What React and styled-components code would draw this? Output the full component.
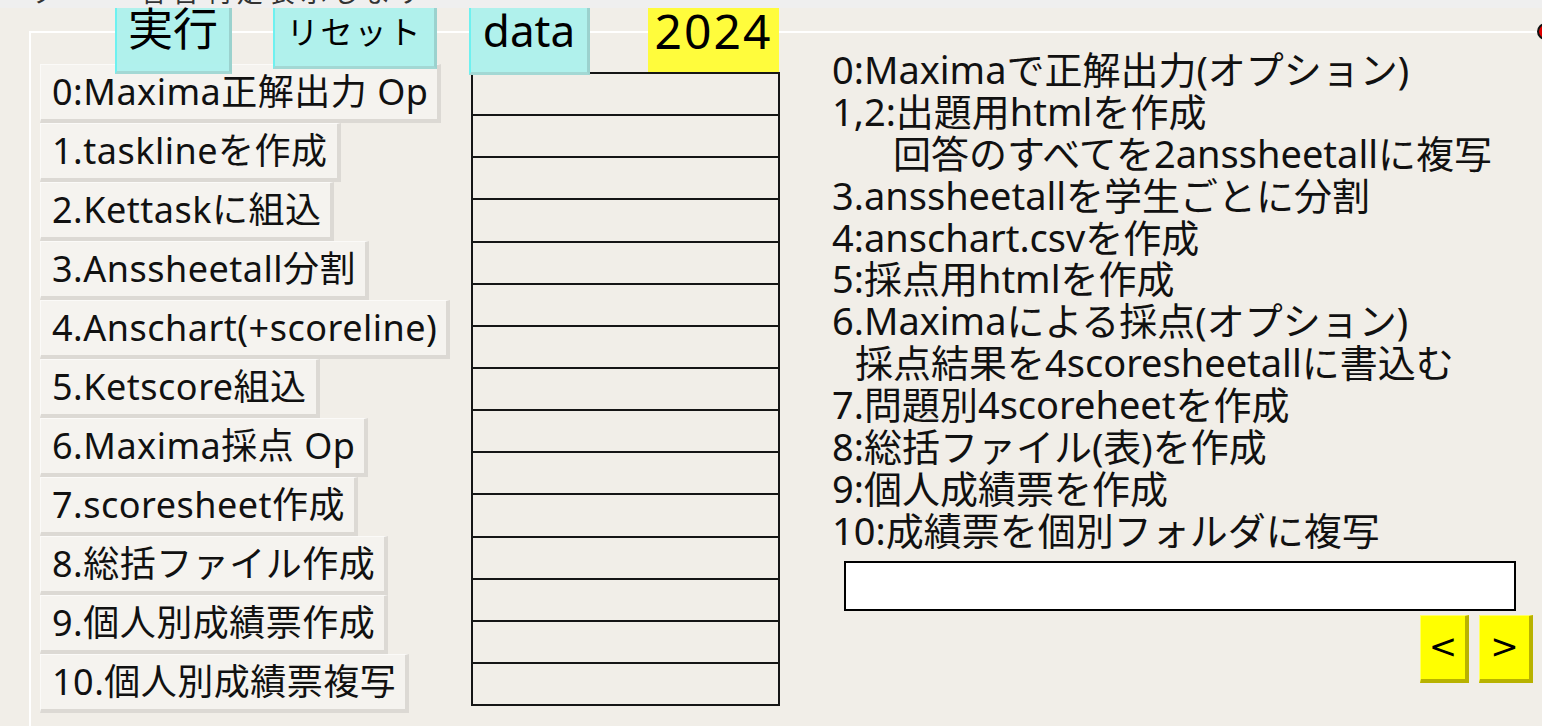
import React from 'react';
import styled, { createGlobalStyle, css } from 'styled-components';

const Global = createGlobalStyle`
  html, body { margin: 0; padding: 0; background: #f1eee8; overflow: hidden; }
  body { font-family: "Noto Sans", "Noto Sans CJK JP", sans-serif; color: #111; }
  #root { width: 1542px; height: 726px; overflow: hidden; }
`;

const TopStrip = styled.div`
  height: 8px;
  background: #efefef;
  overflow: hidden;
`;

const StripText = styled.div`
  font-size: 26px;
  line-height: 26px;
  margin-top: -21px;
  white-space: nowrap;
  color: #333;
  letter-spacing: 6px;
`;

const Panel = styled.div`
  position: relative;
  margin: 23px 0 0 29px;
  border-top: 2px solid #ffffff;
  border-left: 2px solid #ffffff;
  height: 695px;
  box-sizing: border-box;
`;

const Marker = styled.div`
  position: absolute;
  top: -10px;
  right: -12px;
  width: 17px;
  height: 17px;
  border-radius: 50%;
  background: #e00000;
  border: 2px solid #111;
  box-sizing: border-box;
`;

const Toolbar = styled.div`
  display: flex;
  align-items: flex-start;
  height: 41px;
  margin-top: -25px;
  padding-left: 84px;
  position: relative;
  z-index: 2;
`;

const TopButton = styled.div`
  flex: none;
  box-sizing: border-box;
  width: ${p => p.$w}px;
  height: ${p => p.$h}px;
  margin-right: ${p => p.$mr || 0}px;
  font-size: ${p => p.$size}px;
  line-height: ${p => p.$lh}px;
  letter-spacing: ${p => p.$ls || 0}px;
  text-align: center;
  color: #000;
  ${p => p.$variant === 'yellow'
    ? css`
        background: #fffc3c;
      `
    : css`
        background: rgba(172, 240, 236, 0.95);
        border-left: 2px solid #6ef1f0;
        border-right: 3px solid #9bd2ce;
        border-bottom: 3px solid #a3d8d4;
      `}
`;

const Body = styled.div`
  display: flex;
  align-items: flex-start;
`;

const LeftCol = styled.div`
  display: flex;
  flex-direction: column;
  align-items: flex-start;
  width: 431px;
  margin-left: 9px;
  margin-top: 15px;
  flex: none;
`;

const StepButton = styled.div`
  box-sizing: border-box;
  height: 59px;
  padding: 0 9px 0 11px;
  background: #f5f3ef;
  border-top: 1px solid #fbfaf8;
  border-left: 1px solid #fbfaf8;
  border-right: 4px solid #dcd9d4;
  border-bottom: 4px solid #dcd9d4;
  font-size: 36px;
  line-height: 54px;
  letter-spacing: 0.5px;
  white-space: nowrap;
  color: #111;
`;

const Grid = styled.div`
  flex: none;
  width: 309px;
  height: 634px;
  margin-top: 23px;
  box-sizing: border-box;
  border: 2px solid #151515;
  display: flex;
  flex-direction: column;
`;

const GridRow = styled.div`
  flex: 1;
  & + & { border-top: 2px solid #151515; }
`;

const RightCol = styled.div`
  flex: none;
  width: 701px;
  margin-left: 52px;
  display: flex;
  flex-direction: column;
  margin-top: 0;
`;

const InfoLine = styled.div`
  font-size: 38px;
  line-height: 41.9px;
  height: 41.9px;
  padding-left: ${p => p.$indent || 0}px;
  white-space: nowrap;
  color: #111;
`;

const Field = styled.div`
  margin: 9px 0 0 12px;
  width: 672px;
  height: 50px;
  box-sizing: border-box;
  background: #ffffff;
  border: 2px solid #000;
`;

const NavRow = styled.div`
  display: flex;
  justify-content: flex-end;
  gap: 10px;
  margin-top: 4px;
`;

const NavButton = styled.div`
  box-sizing: border-box;
  width: ${p => p.$w}px;
  height: 68px;
  background: #ffff00;
  border-right: 4px solid #b8b200;
  border-bottom: 4px solid #b8b200;
  border-left: 1px solid #ffff66;
  border-top: 1px solid #ffff66;
  font-size: 34px;
  line-height: 60px;
  text-align: center;
  color: #000;
  font-family: "DejaVu Sans", sans-serif;
`;

const steps = [
  '0:Maxima正解出力 Op',
  '1.tasklineを作成',
  '2.Kettaskに組込',
  '3.Anssheetall分割',
  '4.Anschart(+scoreline)',
  '5.Ketscore組込',
  '6.Maxima採点 Op',
  '7.scoresheet作成',
  '8.総括ファイル作成',
  '9.個人別成績票作成',
  '10.個人別成績票複写',
];

const info = [
  { t: '0:Maximaで正解出力(オプション)' },
  { t: '1,2:出題用htmlを作成' },
  { t: '回答のすべてを2anssheetallに複写', i: 61 },
  { t: '3.anssheetallを学生ごとに分割' },
  { t: '4:anschart.csvを作成' },
  { t: '5:採点用htmlを作成' },
  { t: '6.Maximaによる採点(オプション)' },
  { t: '採点結果を4scoresheetallに書込む', i: 23 },
  { t: '7.問題別4scoreheetを作成' },
  { t: '8:総括ファイル(表)を作成' },
  { t: '9:個人成績票を作成' },
  { t: '10:成績票を個別フォルダに複写' },
];

export default function App() {
  return (
    <>
      <Global />
      <TopStrip>
        <StripText>ータ・ー 合否判定表示します</StripText>
      </TopStrip>
      <Panel>
        <Marker />
        <Toolbar>
          <TopButton $w={117} $h={66} $mr={41} $size={45} $lh={42}>実行</TopButton>
          <TopButton $w={164} $h={61} $mr={32} $size={32} $lh={48} $ls={2}>リセット</TopButton>
          <TopButton $w={121} $h={67} $mr={58} $size={44} $lh={44}>data</TopButton>
          <TopButton $w={131} $h={64} $size={48} $lh={46} $ls={2} $variant="yellow">2024</TopButton>
        </Toolbar>
        <Body>
          <LeftCol>
            {steps.map(s => (
              <StepButton key={s}>{s}</StepButton>
            ))}
          </LeftCol>
          <Grid>
            {Array.from({ length: 15 }, (_, i) => (
              <GridRow key={i} />
            ))}
          </Grid>
          <RightCol>
            {info.map(l => (
              <InfoLine key={l.t} $indent={l.i}>{l.t}</InfoLine>
            ))}
            <Field />
            <NavRow>
              <NavButton $w={49}>&lt;</NavButton>
              <NavButton $w={54}>&gt;</NavButton>
            </NavRow>
          </RightCol>
        </Body>
      </Panel>
    </>
  );
}
